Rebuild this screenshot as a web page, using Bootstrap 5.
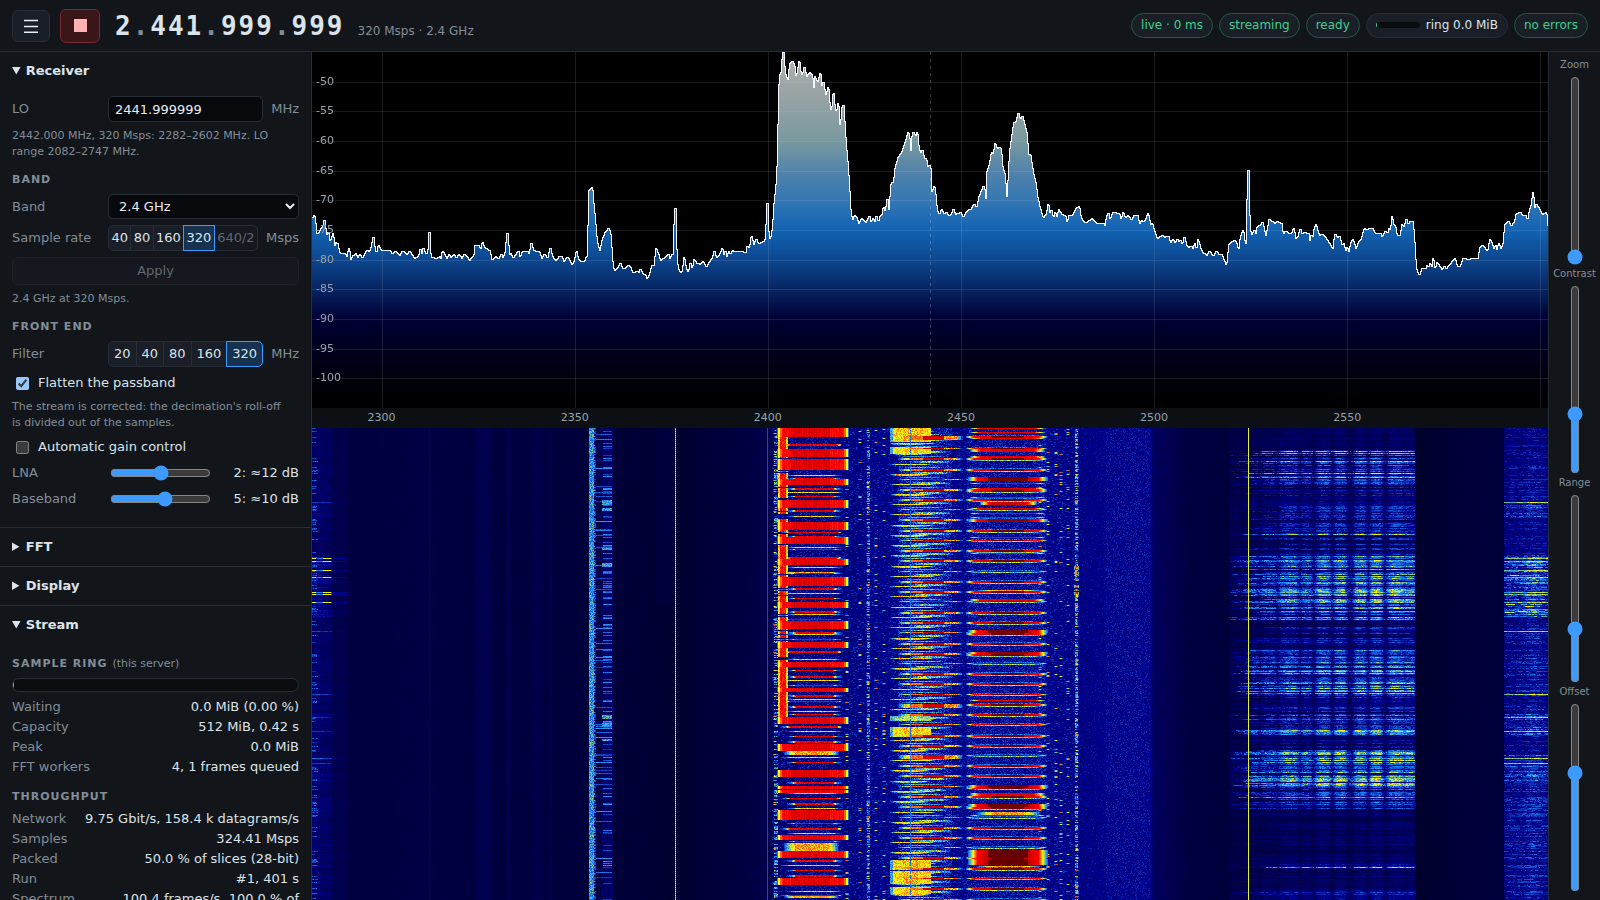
<!DOCTYPE html>
<html lang="en" data-bs-theme="dark">
<head>
<meta charset="utf-8">
<meta name="viewport" content="width=device-width, initial-scale=1">
<title>Spectrum receiver</title>
<link rel="stylesheet" href="https://cdn.jsdelivr.net/npm/bootstrap@5.3.0/dist/css/bootstrap.min.css">
<style>
  :root {
    color-scheme: dark;
    --panel: #12161b;
    --raised: #1a1f27;
    --field: #07090c;
    --edge: #262d35;
    --ink: #dce3ea;
    --dim: #828d97;
    --accent: #3d9bff;
    --good: #3ecf8e;
  }
  body {
    font-family: "DejaVu Sans", sans-serif;
    font-size: 13px;
    line-height: 20px;
    background: var(--panel);
    color: var(--ink);
  }
  .dim { color: var(--dim); }
  .edge-b { border-bottom: 1px solid var(--edge); }
  .min-h-0 { min-height: 0; }
  .min-w-0 { min-width: 0; }

  .topbar { height: 52px; padding: 0 12px; }
  .tool-btn {
    width: 38px; height: 32px; padding: 0;
    background: var(--raised); border: 1px solid var(--edge);
    border-radius: 6px; color: var(--ink);
    display: flex; align-items: center; justify-content: center;
  }
  .tool-btn.stop {
    width: 40px; height: 34px; margin-left: 10px;
    background: #3a1618; border-color: #7a2a2e; color: #ffb3b3;
  }
  .freq {
    font: bold 26px/34px "DejaVu Sans Mono", monospace;
    letter-spacing: 2px;
    margin-left: 15px;
  }
  .freq span { color: var(--dim); }
  .freq-note { font-size: 12px; margin: 10px 0 0 13px; }
  .pills { gap: 6px; }
  .pill {
    display: flex; align-items: center; gap: 6px;
    height: 25px; padding: 0 9px 1px;
    font-size: 12px;
    background: var(--raised); border: 1px solid var(--edge); border-radius: 13px;
  }
  .pill.good { color: var(--good); border-color: #1f5940; }
  .mini-meter { width: 44px; height: 6px; border-radius: 3px; background: #0a0d10; overflow: hidden; }
  .mini-meter i { display: block; width: 1px; height: 6px; background: var(--good); }

  .sidebar {
    width: 312px; flex: none;
    border-right: 1px solid var(--edge);
    overflow-y: auto; scrollbar-width: none;
  }
  .sidebar::-webkit-scrollbar { display: none; }
  .sidebar summary { padding: 9px 12px; font-weight: bold; line-height: 20px; }
  .pane { padding: 6px 12px 18px; display: flex; flex-direction: column; gap: 6px; }
  .stat-pane { padding-top: 12px; gap: 0; }
  .field-row { display: grid; grid-template-columns: 96px minmax(0, 1fr); align-items: center; }
  .field-row .unit { margin-left: 8px; }
  .hint { font-size: 11px; line-height: 16px; margin: 0; padding-right: 8px; }
  .group-title {
    font-size: 11px; line-height: 16px; font-weight: bold;
    letter-spacing: 1px; color: var(--dim); margin: 6px 0 0;
  }
  .group-title small { font-size: 11px; font-weight: normal; letter-spacing: 0; }
  .box {
    background: var(--field); border: 1px solid var(--edge); border-radius: 5px;
    color: #e8eef4; height: 26px; min-width: 0; font-size: 13px;
  }
  input.box { padding: 0 6px; flex: 1 1 0; width: 0; }
  select.box { padding: 0 6px; width: 100%; height: 25px; }
  .seg { flex: 1 1 auto; }
  .seg .btn {
    --bs-btn-border-radius: 5px;
    flex: 1 1 auto; height: 26px; padding: 0 2px;
    font-size: 13px; line-height: 24px;
    background: var(--raised); border-color: var(--edge); color: var(--ink);
  }
  .seg .btn.active { background: #17324f; border-color: var(--accent); color: var(--ink); }
  .seg .btn:disabled { color: #5f6770; background: #15191f; opacity: 1; }
  .apply { height: 28px; padding: 0; font-size: 13px; line-height: 26px; }
  .apply:disabled { background: #15191f; border-color: #1c2128; color: #5f6770; opacity: 1; border-radius: 5px; }
  .tick { display: flex; align-items: center; line-height: 20px; }
  .tick input { width: 13px; height: 13px; margin: 1px 9px 0 4px; }
  input[type=range] { accent-color: var(--accent); }
  .gain input { width: 101px; margin: 0 0 0 2px; }

  .ring-bar { height: 14px; margin: 6px 0 5px; border: 1px solid var(--edge); border-radius: 7px; background: #0a0d10; overflow: hidden; }
  .ring-bar i { display: block; width: 1px; height: 12px; background: #e8a33d; }
  .stats { display: flex; justify-content: space-between; line-height: 20px; }
  .stats dt { font-weight: normal; color: var(--dim); white-space: nowrap; }
  .stats dd { margin: 0; text-align: right; padding-left: 16px; }

  .scope { flex: 43 1 0; min-height: 0; position: relative; background: #000; }
  .scope canvas, .fall canvas { position: absolute; inset: 0; width: 100%; height: 100%; display: block; }
  .db, .mhz { position: absolute; font-size: 11px; line-height: 12px; color: #98a1a9; }
  .db { left: 4px; transform: translateY(-50%); }
  .axis { height: 20px; flex: none; position: relative; background: #0c1014; }
  .mhz { top: 4px; transform: translateX(-50%); }
  .fall { flex: 57 1 0; min-height: 0; position: relative; background: #000030; }

  .sliders { width: 52px; flex: none; border-left: 1px solid var(--edge); padding: 4px 0 8px; }
  .sliders label { font-size: 10px; line-height: 18px; margin-bottom: 2px; color: var(--dim); }
  .sliders input {
    writing-mode: vertical-lr; direction: rtl;
    flex: 1 1 0; min-height: 0; width: 16px; margin: 0;
  }
</style>
</head>
<body>
<div class="vh-100 d-flex flex-column overflow-hidden">
  <header class="topbar edge-b d-flex align-items-center flex-shrink-0">
    <button class="tool-btn" type="button" aria-label="Menu">
      <svg width="14" height="14" viewBox="0 0 14 14" stroke="#e8eef4" stroke-width="1.4"><path d="M0 1.500h14M0 7.500h14M0 13.300h14"/></svg>
    </button>
    <button class="tool-btn stop" type="button" aria-label="Stop">
      <svg width="13" height="13" viewBox="0 0 13 13" fill="currentColor"><path d="M0 0h13v13H0z"/></svg>
    </button>
    <div class="freq">2<span>.</span>441<span>.</span>999<span>.</span>999</div>
    <div class="freq-note dim">320 Msps · 2.4 GHz</div>
    <div class="pills d-flex ms-auto">
      <span class="pill good">live · 0 ms</span>
      <span class="pill good">streaming</span>
      <span class="pill good">ready</span>
      <span class="pill"><span class="mini-meter"><i></i></span>ring 0.0 MiB</span>
      <span class="pill good">no errors</span>
    </div>
  </header>

  <div class="d-flex flex-grow-1 min-h-0">
    <aside class="sidebar">
      <details open class="edge-b">
        <summary>Receiver</summary>
        <div class="pane">
          <div class="field-row">
            <label class="dim" for="lo">LO</label>
            <div class="d-flex align-items-center"><input class="box" id="lo" type="text" value="2441.999999"><span class="unit dim">MHz</span></div>
          </div>
          <p class="hint dim">2442.000 MHz, 320 Msps: 2282–2602 MHz. LO range 2082–2747 MHz.</p>
          <h3 class="group-title">BAND</h3>
          <div class="field-row">
            <label class="dim" for="band">Band</label>
            <select class="box" id="band"><option>2.4 GHz</option></select>
          </div>
          <div class="field-row">
            <span class="dim">Sample rate</span>
            <div class="d-flex align-items-center">
              <div class="btn-group seg" role="group" aria-label="Sample rate">
                <button class="btn" type="button">40</button><button class="btn" type="button">80</button><button class="btn" type="button">160</button><button class="btn active" type="button">320</button><button class="btn" type="button" disabled>640/2</button>
              </div><span class="unit dim">Msps</span>
            </div>
          </div>
          <button class="btn apply" type="button" disabled>Apply</button>
          <p class="hint dim">2.4 GHz at 320 Msps.</p>
          <h3 class="group-title">FRONT END</h3>
          <div class="field-row">
            <span class="dim">Filter</span>
            <div class="d-flex align-items-center">
              <div class="btn-group seg" role="group" aria-label="Filter">
                <button class="btn" type="button">20</button><button class="btn" type="button">40</button><button class="btn" type="button">80</button><button class="btn" type="button">160</button><button class="btn active" type="button">320</button>
              </div><span class="unit dim">MHz</span>
            </div>
          </div>
          <label class="tick"><input type="checkbox" checked>Flatten the passband</label>
          <p class="hint dim">The stream is corrected: the decimation's roll-off is divided out of the samples.</p>
          <label class="tick"><input type="checkbox">Automatic gain control</label>
          <div class="field-row gain">
            <label class="dim" for="lna">LNA</label>
            <div class="d-flex align-items-center justify-content-between"><input id="lna" type="range" min="0" max="4" value="2"><span>2: ≈12 dB</span></div>
          </div>
          <div class="field-row gain">
            <label class="dim" for="bb">Baseband</label>
            <div class="d-flex align-items-center justify-content-between"><input id="bb" type="range" min="0" max="9" value="5"><span>5: ≈10 dB</span></div>
          </div>
        </div>
      </details>
      <details class="edge-b"><summary>FFT</summary></details>
      <details class="edge-b"><summary>Display</summary></details>
      <details open>
        <summary>Stream</summary>
        <div class="pane stat-pane">
          <h3 class="group-title mt-0">SAMPLE RING <small>(this server)</small></h3>
          <div class="ring-bar"><i></i></div>
          <dl class="mb-2">
            <div class="stats"><dt>Waiting</dt><dd>0.0 MiB (0.00 %)</dd></div>
            <div class="stats"><dt>Capacity</dt><dd>512 MiB, 0.42 s</dd></div>
            <div class="stats"><dt>Peak</dt><dd>0.0 MiB</dd></div>
            <div class="stats"><dt>FFT workers</dt><dd>4, 1 frames queued</dd></div>
          </dl>
          <h3 class="group-title mt-1 mb-1">THROUGHPUT</h3>
          <dl class="mb-0">
            <div class="stats"><dt>Network</dt><dd>9.75 Gbit/s, 158.4 k datagrams/s</dd></div>
            <div class="stats"><dt>Samples</dt><dd>324.41 Msps</dd></div>
            <div class="stats"><dt>Packed</dt><dd>50.0 % of slices (28-bit)</dd></div>
            <div class="stats"><dt>Run</dt><dd>#1, 401 s</dd></div>
            <div class="stats"><dt>Spectrum</dt><dd>100.4 frames/s, 100.0 % of samples</dd></div>
          </dl>
        </div>
      </details>
    </aside>

    <main class="flex-grow-1 d-flex flex-column min-w-0">
      <div class="scope" id="scope"><canvas></canvas></div>
      <div class="axis" id="axis"></div>
      <div class="fall" id="fall"><canvas></canvas></div>
    </main>

    <aside class="sliders d-flex flex-column align-items-center">
      <label for="s1">Zoom</label><input id="s1" type="range" min="0" max="1000" value="0">
      <label for="s2">Contrast</label><input id="s2" type="range" min="0" max="1000" value="300">
      <label for="s3">Range</label><input id="s3" type="range" min="0" max="1000" value="264">
      <label for="s4">Offset</label><input id="s4" type="range" min="0" max="1000" value="642">
    </aside>
  </div>
</div>

<script src="https://cdn.jsdelivr.net/npm/bootstrap@5.3.0/dist/js/bootstrap.bundle.min.js"></script>
<script>
const F0 = 2282, F1 = 2602, DB0 = -45, DB1 = -105;
const W = 1236, H = 356, FH = 472;   // resolution of the stored sweep

// Peak trace, three sweeps: offset of the sweep, then x,y pairs in third-bins
const sweeps = [
 [-2,-2,"6,505 12,497 15,515 19,553 24,550 30,540 36,530 40,522 42,506 46,540 50,562 54,545 58,575 64,565 68,550 73,592 76,577 82,582 88,610 102,610 110,620 116,593 121,633 128,618 136,611 142,626 148,611 156,627 164,610 171,600 178,606 183,592 189,559 194,600 199,614 204,585 212,600 238,602 246,612 256,603 268,619 276,603 290,614 298,603 312,627 325,619 330,594 334,615 339,594 345,611 353,611 355,548 358,548 361,620 376,626 390,620 391,633 396,603 404,615 410,629 416,612 422,627 430,612 438,627 446,612 454,627 462,612 470,620 478,635 486,620 491,619 493,585 506,585 511,605 516,576 522,593 538,602 545,634 556,620 566,628 573,613 578,627 584,610 587,582 590,549 593,549 596,620 602,611 608,627 618,612 624,603 629,626 636,605 650,603 657,615 663,577 668,600 680,606 686,603 694,627 702,612 712,628 720,593 726,620 738,634 746,620 754,620 760,636 772,621 785,645 792,635 798,603 803,628 812,636 824,634 828,620 832,618 835,424 846,413 850,465 855,515 860,575 868,608 876,570 884,548 894,536 900,545 905,612 908,655 914,662 924,652 930,638 936,655 946,655 952,647 960,650 965,668 984,664 986,672 990,657 998,674 1005,674 1010,688 1018,672 1024,648 1033,645 1036,593 1044,612 1050,635 1058,627 1068,620 1074,612 1079,632 1084,612 1088,625 1091,534 1093,476 1096,476 1097,555 1100,635 1106,664 1112,670 1117,662 1121,620 1127,656 1134,670 1140,638 1146,663 1151,629 1160,641 1170,643 1178,634 1188,655 1198,635 1206,625 1212,602 1218,627 1230,611 1236,594 1240,620 1245,602 1250,626 1255,602 1260,617 1266,602 1280,606 1290,604 1308,608 1310,590 1318,592 1323,558 1330,587 1338,567 1344,584 1352,577 1364,575 1368,515 1370,460 1372,460 1374,525 1376,590"],
 [448,-12,"25,620 28,598 34,588 38,545 42,480 46,455 50,395 53,270 56,138 60,98 65,98 65,62 68,36 71,36 71,68 76,108 83,124 88,72 96,65 102,75 107,120 112,90 117,60 120,92 126,112 132,78 138,112 148,98 156,107 160,172 163,108 172,130 180,98 184,140 189,125 196,170 204,140 209,205 214,218 219,155 224,208 229,218 234,188 239,280 243,232 246,196 250,196 254,272 258,325 263,380 267,445 271,515 276,545 282,527 290,535 295,552 304,534 317,550 327,527 332,550 338,535 343,550 348,528 354,550 360,528 365,525 369,502 375,518 381,474 386,520 390,462 393,428 400,427 405,380 414,352 424,338 430,322 438,295 444,276 448,298 451,355 455,290 459,276 466,292 471,277 476,330 482,338 486,330 492,355 498,356 503,390 507,375 512,388 513,440 515,486 518,450 522,437 526,465 530,512 537,525 544,509 551,522 558,517 567,530 574,520 579,508 586,524 601,517 609,533 617,518 625,508 632,508 641,492 649,506 657,468 664,452 669,437 673,450 677,489 680,395 687,375 694,335 699,348 704,308 711,330 716,322 722,325 727,385 733,402 737,445 740,491 745,388 748,335 754,295 760,250 768,243 774,218 780,242 786,228 792,252 799,280 804,340 806,355 810,342 815,378 820,405 826,430 832,475 838,500 848,535 858,524 864,491 869,528 873,508 879,540 884,518 890,533 895,509 903,523 915,528 920,550 926,528 936,527 942,515 949,504 957,500 962,535 974,550 982,546 995,536 1008,551 1030,552 1034,560 1039,530 1044,518 1049,542 1058,518 1077,520 1082,543 1088,518 1095,535 1103,526 1114,542 1122,525 1132,526 1137,555 1144,540 1150,548 1158,535 1163,518 1170,555 1176,551 1184,580 1190,597 1200,590 1206,587 1213,593 1224,588 1230,610 1238,597 1244,612 1252,597 1257,614"],
 [848,98,"60,268 66,290 72,260 78,285 84,292 94,290 99,298 103,280 109,308 113,268 120,293 128,312 134,311 138,320 147,304 154,313 160,320 168,304 176,314 184,315 190,328 196,345 201,338 205,285 213,278 222,270 230,283 235,310 240,262 246,245 249,242 254,285 258,278 260,170 262,60 265,60 266,150 269,240 274,256 282,240 287,255 290,232 300,225 307,217 311,238 316,262 322,235 326,207 333,216 338,214 342,222 350,214 364,222 368,257 376,243 386,251 394,250 400,234 406,268 414,258 420,235 425,258 430,246 440,250 446,250 448,288 451,255 458,262 462,235 467,223 476,257 486,252 496,263 508,282 518,300 523,252 532,262 538,260 545,290 550,280 556,308 560,290 566,310 571,280 578,268 587,300 594,278 603,268 612,236 622,240 628,234 636,236 645,250 660,250 665,265 673,245 683,248 687,235 690,250 695,198 699,222 705,230 710,257 720,255 725,224 731,232 738,206 743,225 750,214 757,216 761,250 764,300 767,355 774,372 780,372 786,355 797,357 800,345 804,358 810,340 814,362 818,322 824,362 830,338 838,350 846,362 852,348 858,362 864,348 872,340 884,325 890,350 900,350 908,325 920,328 954,325 958,294 966,285 982,306 989,266 996,285 1001,300 1006,285 1010,304 1015,278 1021,298 1029,280 1033,225 1044,214 1053,230 1064,212 1068,190 1080,188 1086,196 1096,198 1102,213 1108,180 1113,165 1118,125 1123,175 1128,162 1137,178 1146,195 1158,188 1162,232 1164,232"]
];
const trace = [];
for (const [ox, oy, s] of sweeps)
  for (const p of s.split(" ")) { const [a, b] = p.split(",").map(Number); trace.push([a / 3 + ox, b / 3 + oy]); }
function levelAt(x) {
  let i = 1;
  while (i < trace.length - 1 && trace[i][0] < x) i++;
  const a = trace[i - 1], b = trace[i], d = b[0] - a[0];
  return d <= 0 ? b[1] : a[1] + (b[1] - a[1]) * Math.min(1, Math.max(0, (x - a[0]) / d));
}

function drawScope() {
  const c = document.querySelector("#scope canvas"), w = c.width = c.clientWidth, h = c.height = c.clientHeight;
  const g = c.getContext("2d"), grad = g.createLinearGradient(0, 0, 0, h);
  [[0,"#b2b2b2"],[.096,"#9ea5a7"],[.247,"#7a999e"],[.341,"#5082ab"],[.416,"#3577b4"],[.5,"#1263b3"],[.584,"#0d478f"],
   [.669,"#072360"],[.748,"#000036"],[.837,"#00001e"],[.92,"#00000c"],[1,"#000000"]].forEach(s => grad.addColorStop(...s));
  const ys = [];
  for (let x = 0; x < w; x++) {
    const peak = Math.min(...[.2, .5, .8].map(o => levelAt((x + o) * W / w)));
    ys.push(Math.max(0, Math.floor(peak * h / H)));
  }
  g.fillStyle = grad;
  ys.forEach((y, x) => g.fillRect(x, y, 1, h - y));
  g.fillStyle = "rgba(200,210,225,.13)";
  for (let d = -50; d > DB1; d -= 5) g.fillRect(0, Math.round((DB0 - d) / (DB0 - DB1) * h), w, 1);
  for (let f = 2300; f < F1; f += 50) g.fillRect(Math.round((f - F0) / (F1 - F0) * w), 0, 1, h);
  g.fillStyle = "rgba(210,225,240,.25)";
  for (let y = 0; y < h; y += 7) g.fillRect(Math.round(w / 2), y, 1, 3);
  g.fillStyle = "#f2f8ff";
  ys.forEach((y, x) => {
    const p = x ? ys[x - 1] : y;
    g.fillRect(x, Math.min(y, p), 1, Math.abs(y - p) + 1);
  });
}

// ---- waterfall ----
let seed = 12345;
const rnd = () => (seed = (seed * 1664525 + 1013904223) >>> 0) / 4294967296;
const row3 = y => Math.round(y / 3) - 8;
const cmap = [[0,0,0,24],[.08,0,0,44],[.16,0,0,76],[.27,0,0,142],[.44,30,144,255],[.6,255,255,0],[.69,254,109,22],[.77,255,0,0],[.84,204,0,0],[.92,117,0,0],[1,80,0,0]];
function colour(v) {
  v = Math.min(1, Math.max(0, v));
  let i = 1; while (cmap[i][0] < v) i++;
  const a = cmap[i - 1], b = cmap[i], t = (v - a[0]) / (b[0] - a[0]);
  return [1, 2, 3].map(k => a[k] + (b[k] - a[k]) * t);
}
const V = new Float32Array(W * FH);
const put = (x, y, v) => { if (x >= 0 && x < W && y >= 0 && y < FH && V[y * W + x] < v) V[y * W + x] = v; };
const set = (x, y, v) => { if (x >= 0 && x < W && y >= 0 && y < FH) V[y * W + x] = v; };
// streak with soft shoulders
function streak(x0, x1, y, peak, soft, rough) {
  for (let x = x0; x <= x1; x++) {
    const e = Math.min(1, (Math.min(x - x0, x1 - x) + 1) / soft);
    put(x, y, .2 + (peak - .2) * Math.sqrt(e) + (rnd() - .5) * rough);
  }
}
function buildFall() {
  const base = [[0,.19],[20,.16],[40,.13],[110,.14],[150,.13],[250,.12],[276,.12],[277,.2],[300,.2],[301,.11],[370,.09],[440,.14],[455,.16],[468,.22],[536,.24],[560,.26],[735,.26],[768,.25],[795,.26],[838,.26],[841,.19],[880,.13],[916,.12],[918,.14],[1102,.16],[1104,.08],[1150,.11],[1191,.12],[1193,.21],[1236,.21]];
  for (let x = 0; x < W; x++) {
    let i = 1; while (base[i][0] < x) i++;
    const a = base[i - 1], b = base[i], m = a[1] + (b[1] - a[1]) * (x - a[0]) / (b[0] - a[0] || 1);
    const n = x < 277 || (x > 300 && x < 450) || (x > 841 && x < 916) || (x > 1104 && x < 1191) ? .02 : .05;
    for (let y = 0; y < FH; y++) V[y * W + x] = m + (rnd() - .5) * n;
  }
  for (let y = 0; y < FH; y++) {
    // faint carriers
    put(117, y, .22); put(195, y, .2 + rnd() * .04); put(196, y, .18); put(238, y, .18);
    for (let x = 163; x < 179; x++) put(x, y, .145 + rnd() * .03);
    for (let x = 220; x < 232; x++) put(x, y, .14 + rnd() * .025);
    if (y < 178) for (let x = 343; x < 362; x++) put(x, y, .125);
    // carrier at 2354 MHz with its skirt
    for (let x = 277; x < 282; x++) put(x, y, .37 + rnd() * .15);
    if (rnd() < .6) { put(282, y, .32 + rnd() * .15); put(283, y, .3 + rnd() * .1); }
    const hit = rnd() < .3 ? .3 + rnd() * .12 : 0;
    if (hit) for (let x = rnd() < .3 ? 284 : 291; x < 300; x++) put(x, y, hit + rnd() * .06);
    else for (let x = 284; x < 289; x++) set(x, y, .1 + rnd() * .06);
    if (y % 2) put(363, y, .59); else put(363, y, .46);
    put(455, y, .36);
    // hopping columns
    if (rnd() < .4) for (let x = 462; x < 466; x++) put(x, y, .33 + rnd() * .22);
    if (rnd() < .5) for (let x = 555; x < 558; x++) put(x, y, .3 + rnd() * .22);
    if (rnd() < .65) for (let x = 763; x < 766; x++) put(x, y, .32 + rnd() * .24);
  }
  [[72,5],[80,3],[120,2],[135,4],[287,4],[295,3],[311,2]].forEach(([y, n]) => { for (let i = 0; i < n; i++) for (let x = 290; x < 300; x++) put(x, y + i, .38 + rnd() * .14); });
  // blue speckle around the busy channels
  for (let i = 0; i < 12000; i++) { const x = 460 + Math.floor(rnd() * 306), y = Math.floor(rnd() * FH); put(x, y, .27 + rnd() * .08); put(x + 1, y, .27 + rnd() * .06); }
  for (let i = 0; i < 5200; i++) put(794 + Math.floor(rnd() * 44), Math.floor(rnd() * FH), .27 + rnd() * .06);
  for (let i = 0; i < 1500; i++) put(766 + Math.floor(rnd() * 72), Math.floor(rnd() * FH), .28 + rnd() * .04);
  for (const cx of [462, 534, 547, 555, 563, 571, 727, 735, 743, 748, 755, 764]) for (let i = 0; i < (cx === 764 || cx === 555 ? 60 : 36); i++) {
    const y = Math.floor(rnd() * FH), v = .48 + rnd() * .24;
    for (let x = -1; x < 3; x++) put(cx + x, y, x === -1 || x === 2 ? .4 : v);
  }
  for (let y = 138; y < 168; y++) if (rnd() < .5) for (let x = 762; x < 767; x++) put(x, y, x < 763 || x > 765 ? .5 : .62 + rnd() * .2);

  // channel 1
  for (let y = 0; y < FH; y++) for (let x = 483; x < 524; x++) if (rnd() < .3) put(x, y, .25 + rnd() * .08);
  for (let y = 8; y < 290; y++) {
    const firm = y < 22 || (y > 116 && y < 146) || y > 238;
    if (rnd() < (firm ? .97 : .7)) for (let x = 466; x < 476; x++) put(x, y, x < 468 || x > 473 ? .58 + rnd() * .1 : .72 + rnd() * .1);
  }
  [72,165,173,203,215,227,270,288,336,349,380,388,410,440,460,503,520,535,572,582,597,635,642,657,693,717,750,767,780,795,824,836,844,858,873,882,918,932,948,963,1012,1026,1085,1120,1135,1148,1165,1208,1225,1240,1264,1320,1335,1350,1365,1412,1425].forEach((q, i) => {
    const y = row3(q), hot = i % 3 !== 1, wide = i % 4 === 0;
    for (let k = 0; k < (i % 3 === 0 ? 2 : 1); k++) {
      streak(wide ? 468 : 474, 530, y + k, .5, 12, .1);
      streak(wide ? 474 : 480, wide ? 528 : 524, y + k, hot ? .8 : .62, 5, .1);
    }
  });
  [[994,1006],[1270,1292],[456,462],[1225,1230],[1425,1434]].forEach(([a, b]) => { for (let y = row3(a); y < row3(b); y++) streak(472, 526, y, .66, 12, .1); });
  [[24,52],[88,112],[117,150],[178,196],[240,264],[305,329],[352,372],[417,434],[470,497],[546,564],[604,626],[666,684],[726,742],[804,816],[891,911],[972,994],[1050,1070],[1098,1107],[1110,1118],[1170,1200],[1245,1260],[1293,1314],[1375,1395]].forEach(([a, b]) => {
    for (let y = row3(a); y < row3(b); y++) for (let x = 465; x < 537; x++) {
      const edge = Math.min(x - 465, 536 - x), mid = x > 478 && x < 518 ? .04 : 0;
      set(x, y, edge < 1 ? .4 : edge < 3 ? .6 : edge < 5 ? .7 : .755 + mid + (x * 7 % 5) * .009 + (rnd() - .5) * .04);
    }
  });

  // channel 7
  const beacons = [48,85,115,147,176,206,237,268,296,330,361,391,421,452,483,513,544,576,606,636,668,698,728,758,789,822,851,883,912,944,974,1004,1036,1066,1098,1128,1159,1190,1220,1250,1281,1312,1344,1374,1404,1436];
  for (let y = 0; y < FH; y++) {
    for (let x = 586; x < 640; x++) if (rnd() < .4) put(x, y, .27 + rnd() * .12);
    for (let x = 655; x < 734; x++) if (rnd() < .42) put(x, y, .25 + rnd() * .1);
  }
  beacons.forEach((q, i) => {
    const y = row3(q), tall = [0, 26, 31].includes(i) ? 4 : i % 3 === 1 ? 1 : 2;
    streak(578, 616 + Math.floor(rnd() * 8), row3(q - 15), .59 + rnd() * .05, 8, .12);
    if (rnd() < .5) streak(580, 614, row3(q - 12), .54, 12, .14);
    for (let k = 0; k < 2; k++) streak(598, 634 + Math.floor(rnd() * 8), row3(q + 9) + k, .5, 12, .2);
    streak(590, 632, y - 2, .44 + rnd() * .06, 12, .16);
    for (let k = 0; k < tall; k++) {
      streak(586, 650, y + k, .62, 12, .12);
      for (let x = 598; x < 646; x++) put(x, y + k, x < 611 ? .66 + rnd() * .07 : x < 632 ? .81 + rnd() * .05 : .58 + rnd() * .16);
    }
    // channel 12, same beacon interval
    const fat = [5, 19, 21, 34, 36].includes(i) ? 3 : i % 3 === 1 ? 1 : 2;
    for (let k = -1; k <= fat; k++) {
      if (k < 0 || k === fat) { streak(656, 732, y + k, k < 0 ? .38 : .52, 14, .16); continue; }
      streak(654, 734, y + k, .78, 9, .03);
      for (let x = 668; x < 722; x++) put(x, y + k, x > 678 && x < 712 ? .93 : .82);
    }
  });
  [[24,66,.56],[82,102,.54],[888,904,.46],[922,950,.54],[1320,1350,.56],[1352,1392,.56],[1400,1422,.55]].forEach(([a, b, v]) => {
    for (let y = row3(a); y < row3(b); y++) for (let x = 578; x < 619; x++) put(x, y, (x < 581 ? .4 : v) + rnd() * .12 + (x > 590 && x < 606 ? .03 : 0));
  });
  for (let y = 0; y < FH; y++) if (rnd() < .8) set(598, y, .36 + rnd() * .08);
  const block = (a, b, v) => { for (let y = row3(a); y < row3(b); y++) for (let x = 656; x < 736; x++) {
    const e = Math.min(x - 656, 735 - x);
    set(x, y, e < 9 ? .4 + e * .042 : e < 20 ? .77 + (e - 9) * .008 : v);
  } };
  [[24,27],[36,40],[55,57],[88,95],[109,113],[150,153],[190,192],[204,207],[211,216],[230,233],[238,243],[264,268],[280,282],[292,294],[352,354],[400,402],[514,518],[538,544],[840,844],[1120,1128],[1184,1188]].forEach(([a, b]) => {
    for (let y = row3(a); y < Math.max(row3(a) + 1, row3(b)); y++) streak(658, 732, y, .8, 12, .06);
  });
  for (let y = row3(245); y < row3(256); y++) streak(668, 724, y, .84, 12, .06);
  block(172, 183, .93); block(297, 306, .9); block(630, 639, .92); block(696, 702, .9); block(1095, 1103, .94); block(1152, 1161, .93); block(1290, 1314, .95); block(1317, 1336, .95);
  [[509,513],[1176,1184],[1338,1341]].forEach(([a, b]) => { for (let y = row3(a); y < row3(b); y++) streak(664, 728, y, .66, 18, .08); });

  // uplink block, 2520–2568 MHz
  const lanes = [[940,8,.45],[956,9,.5],[973,7,.65],[978,9,.75],[994,6,.6],[1011,8,.9],[1028,7,.9],[1048,7,.9],[1064,7,1],[1084,10,.95],[1097,7,.8]];
  const lane = x => lanes.reduce((m, l) => Math.max(m, l[2] * Math.exp(-Math.pow((x - l[0]) / l[1], 4))), .08);
  const zones = [[24,90,.2],[90,190,.6],[190,240,.45],[240,405,.5],[405,600,.9],[600,690,.5],[690,825,.8],[825,880,.5],[880,945,.75],[945,985,.4],[985,1100,.97],[1100,1165,.6],[1165,1320,.25],[1320,1380,.4],[1380,1410,.25],[1410,1440,.5]];
  const bright = new Set([94,100,124,160,172,343,516,524,754,760,790,803,814,820,930,934,995,1013,1020,1056,1091,1132,1342].map(row3));
  for (let y = 0; y < FH; y++) {
    const q = (y + 8) * 3, z = zones.find(k => q < k[1]) || zones[15];
    const r = rnd(), act = bright.has(y) ? 1.15 : z[2] * (r < .3 ? 1.15 : r < .75 ? .75 : .35);
    const start = act > .6 ? 918 + Math.floor(rnd() * rnd() * 60) : 922 + Math.floor(rnd() * 50);
    let hold = 0;
    for (let x = 917; x < 1103; x++) {
      if (rnd() < .6) hold = rnd();
      const on = x >= start ? 1 : .4;
      set(x, y, .12 + act * on * (.06 + .24 * lane(x)) + hold * .14 * (act * on + .2));
    }
  }
  for (let y = 0; y < FH; y++) set(936, y, .58);
  // band at the right edge, with its alias on the left
  const alias = new Set([247,415,424,450,470,516,522,545,634,823,892,932,1015,1030].map(row3));
  const zr = [[24,130,.25],[130,250,.35],[250,294,.65],[294,405,.3],[405,470,.85],[470,590,.8],[590,700,.4],[700,880,.45],[880,950,.65],[950,1005,.35],[1005,1100,.7],[1100,1440,.45]];
  for (let y = 0; y < FH; y++) {
    const q = (y + 8) * 3, z = zr.find(k => q < k[1]) || zr[11], line = alias.has(y);
    const a = z[2] * (rnd() < .4 ? 1.1 : .55); let hold = 0;
    for (let x = 1192; x < W; x++) {
      if (rnd() < .55) hold = rnd();
      const c = Math.exp(-Math.pow((x - 1221) / 9, 2));
      set(x, y, line ? .44 + hold * .12 + (x > 1214 ? .05 : 0) : .18 + a * (.08 + .1 * c) + hold * .17 * (a + .35));
    }
    if (a > .8 && rnd() < .3) { const x0 = 1192 + Math.floor(rnd() * 24); for (let x = x0; x < x0 + 9; x++) put(x, y, .52 + rnd() * .1); }
    for (let x = 0; x < 36; x++) {
      const k = x < 20 ? 1 : .45;
      const strong = line && q > 405 && q < 560;
      if (strong) put(x, y, (x < 4 || (x > 10 && x < 19) ? .56 : x < 20 ? .4 : .24) + rnd() * .05);
      else put(x, y, .13 + (a * .14 + (line ? .14 : 0)) * k * (1 - x / 60) + rnd() * .07 * k);
    }
    if (rnd() < .2) for (let x = 0; x < 3 + rnd() * 3; x++) put(x, y, .3 + rnd() * .12);
  }
}
buildFall();
const sweepImage = document.createElement("canvas");
sweepImage.width = W; sweepImage.height = FH;
(() => {
  const g = sweepImage.getContext("2d"), im = g.createImageData(W, FH);
  for (let i = 0; i < V.length; i++) { const c = colour(V[i]); im.data[i * 4] = c[0]; im.data[i * 4 + 1] = c[1]; im.data[i * 4 + 2] = c[2]; im.data[i * 4 + 3] = 255; }
  g.putImageData(im, 0, 0);
})();
function drawFall() {
  const c = document.querySelector("#fall canvas");
  c.width = c.clientWidth; c.height = c.clientHeight;
  const g = c.getContext("2d");
  g.imageSmoothingEnabled = false;
  g.drawImage(sweepImage, 0, 0, c.width, c.height);
}

for (let d = -50; d > DB1; d -= 5) {
  const e = document.createElement("span");
  e.className = "db"; e.textContent = d; e.style.top = (DB0 - d) / (DB0 - DB1) * 100 + "%";
  document.getElementById("scope").append(e);
}
for (let f = 2300; f < 2600; f += 50) {
  const e = document.createElement("span");
  e.className = "mhz"; e.textContent = f; e.style.left = (f - F0) / (F1 - F0) * 100 + "%";
  document.getElementById("axis").append(e);
}
const draw = () => { drawScope(); drawFall(); };
draw();
addEventListener("resize", draw);
</script>
</body>
</html>
